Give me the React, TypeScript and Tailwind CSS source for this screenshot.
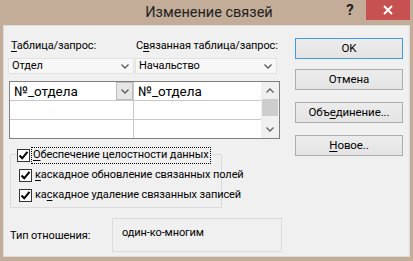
import React from "react";

const Chevron = ({ up = false, color = "#5a5a5a" }: { up?: boolean; color?: string }) => (
  <svg width="8" height="5" viewBox="0 0 8 5" className="block">
    <path d={up ? "M0.5 4.5 L4 1 L7.5 4.5" : "M0.5 0.5 L4 4 L7.5 0.5"} fill="none" stroke={color} strokeWidth="1.3" />
  </svg>
);

const Check = () => (
  <div className="w-[13px] h-[13px] border border-[#333333] bg-white flex items-center justify-center shrink-0">
    <svg width="11" height="11" viewBox="0 0 11 11" className="block">
      <path d="M1.5 5.5 L4.2 8.3 L9.5 1.8" fill="none" stroke="#000" strokeWidth="2" />
    </svg>
  </div>
);

const U = ({ children }: { children: React.ReactNode }) => <span className="underline underline-offset-2">{children}</span>;

const Btn = ({ children, primary = false }: { children: React.ReactNode; primary?: boolean }) => (
  <div
    className={`w-[108px] h-[21px] flex items-center justify-center text-[11.5px] whitespace-nowrap bg-gradient-to-b from-[#ececec] to-[#e4e4e4] border ${
      primary ? "border-[#3c9bea]" : "border-[#adadad]"
    }`}
  >
    {children}
  </div>
);

export default function App() {
  return (
    <div
      className="w-[413px] h-[261px] bg-[#c3ad98] flex flex-col text-black overflow-hidden whitespace-nowrap"
      style={{ fontFamily: 'Roboto, "Noto Sans", sans-serif' }}
    >
      <div className="h-[25px] flex items-start shrink-0">
        <div className="flex-1 h-[25px] flex items-center justify-center pl-[76px] text-[14.5px] text-[#222]">
          Изменение связей
        </div>
        <div className="w-[16px] h-[20px] flex items-center justify-center text-[15px] font-bold text-[#222] mr-[8px]">?</div>
        <div className="w-[44px] h-[20px] bg-[#c75050] flex items-center justify-center mr-[3px]">
          <svg width="10" height="10" viewBox="0 0 10 10" className="block">
            <path d="M1 1 L9 9 M9 1 L1 9" stroke="#fff" strokeWidth="2" />
          </svg>
        </div>
      </div>
      <div className="flex-1 mx-[3px] mb-[4px] bg-[#f0f0f0] flex border border-[#dcdcdc] text-[11px] tracking-[-0.1px]">
        <div className="w-[284px] flex flex-col pl-[4px]">
          <div className="flex h-[19px] mt-[11px] items-center">
            <div className="w-[127px] pl-[3px]"><U>Т</U>аблица/запрос:</div>
            <div className="pl-[1px]">С<U>в</U>язанная таблица/запрос:</div>
          </div>
          <div className="flex mt-[2px] h-[16px]">
            <div className="w-[126px] flex items-center justify-between bg-[#f7f7f7] border border-[#e2e2e2] pl-[3px] pr-[4px]">
              <span>Отдел</span>
              <Chevron />
            </div>
            <div className="w-[142px] ml-[1px] flex items-center justify-between bg-[#f7f7f7] border border-[#e2e2e2] pl-[3px] pr-[4px]">
              <span>Начальство</span>
              <Chevron />
            </div>
          </div>
          <div className="mt-[7px] ml-[1px] w-[271px] h-[58px] border border-[#7f7f7f] bg-white flex">
            <div className="flex-1 flex flex-col">
              <div className="h-[19px] flex border-b border-[#c8c8c8]">
                <div className="w-[124px] flex items-center justify-between border-r border-[#c8c8c8] pl-[4px] text-[13.5px] tracking-normal">
                  <span>№_отдела</span>
                  <div className="w-[17px] h-[18px] bg-[#e6e6e6] border border-[#bcbcbc] flex items-center justify-center">
                    <Chevron />
                  </div>
                </div>
                <div className="flex-1 flex items-center pl-[4px] text-[13.5px] tracking-normal">№_отдела</div>
              </div>
              <div className="h-[19px] flex border-b border-[#c8c8c8]">
                <div className="w-[124px] border-r border-[#c8c8c8]" />
                <div className="flex-1" />
              </div>
              <div className="flex-1 flex">
                <div className="w-[124px] border-r border-[#c8c8c8]" />
                <div className="flex-1" />
              </div>
            </div>
            <div className="w-[18px] bg-[#f0f0f0] flex flex-col items-center">
              <div className="h-[17px] flex items-center justify-center"><Chevron up color="#606060" /></div>
              <div className="w-[16px] h-[17px] bg-[#cdcdcd]" />
              <div className="flex-1" />
              <div className="h-[17px] flex items-center justify-center"><Chevron color="#606060" /></div>
            </div>
          </div>
          <div className="relative mt-[15px] ml-[2px] w-[212px] border border-[#dcdcdc] pt-[14px] pb-[5px] pl-[8px] flex flex-col gap-[7px]">
            <div className="absolute left-[6px] top-[-7px] flex items-center bg-[#f0f0f0] pr-[2px]">
              <Check />
              <span className="ml-[2px] px-[1px] h-[15px] flex items-center outline outline-1 outline-dotted outline-[#000]">
                <U>О</U>беспечение целостности данных
              </span>
            </div>
            <div className="flex items-center h-[13px]">
              <Check />
              <span className="ml-[3px]"><U>к</U>аскадное обновление связанных полей</span>
            </div>
            <div className="flex items-center h-[13px]">
              <Check />
              <span className="ml-[3px]">ка<U>с</U>кадное удаление связанных записей</span>
            </div>
          </div>
          <div className="flex items-center mt-[10px]">
            <div className="w-[104px] pl-[2px] pt-[2px]">Тип отношения:</div>
            <div className="w-[170px] h-[34px] border border-[#dcdcdc] pl-[9px] pb-[4px] flex items-center">
              один-ко-многим
            </div>
          </div>
        </div>
        <div className="flex flex-col gap-[10px] pt-[12px] pl-[7px]">
          <Btn primary>OK</Btn>
          <div className="flex flex-col gap-[12px]">
            <Btn>Отмена</Btn>
            <Btn>Объ<U>е</U>динение...</Btn>
            <Btn><U>Н</U>овое..</Btn>
          </div>
        </div>
      </div>
    </div>
  );
}
